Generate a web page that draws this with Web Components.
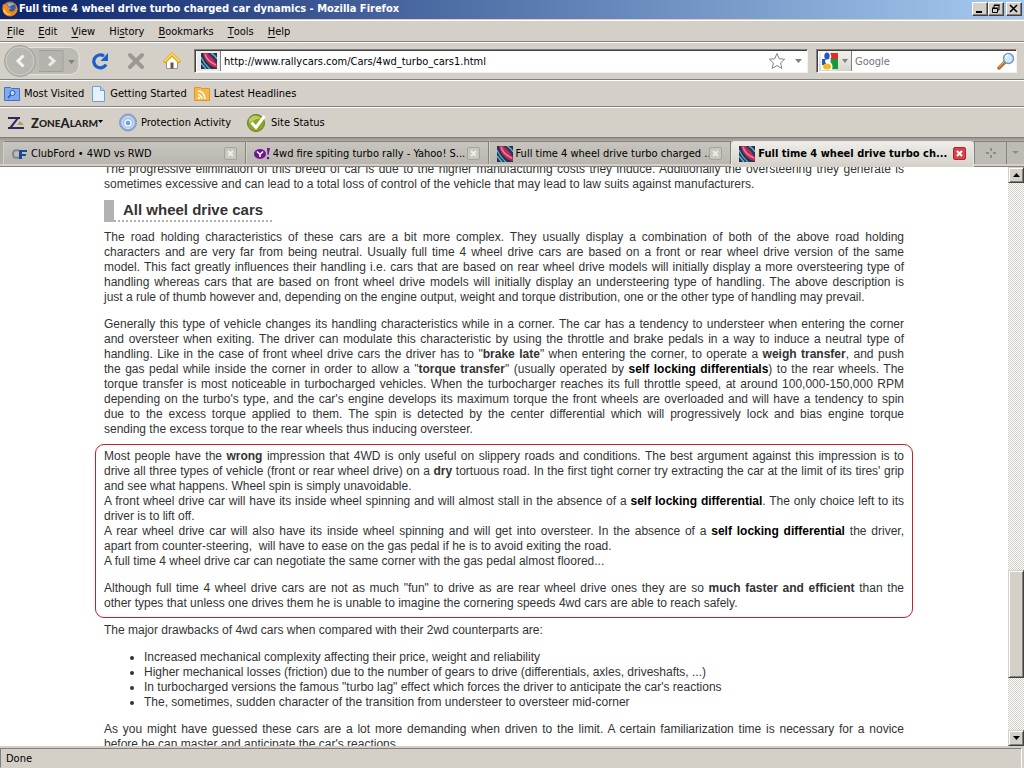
<!DOCTYPE html>
<html lang="en">
<head>
<meta charset="utf-8">
<title>Full time 4 wheel drive turbo charged car dynamics - Mozilla Firefox</title>
<style>
html, body { margin: 0; height: 100%; }
body { font: 11px/14px "DejaVu Sans Condensed", "Liberation Sans", sans-serif; color: #000; background: #d4d0c8; overflow: hidden; }
</style>
</head>
<body>
<browser-window></browser-window>
<script>
const define = (name, css, html) => {
  const template = document.createElement('template');
  template.innerHTML = `<style>
    *, *::before, *::after { box-sizing: border-box; }
    :host { display: flex; box-sizing: border-box; }
    button { font: inherit; color: inherit; background: none; border: 0; padding: 0; margin: 0; display: flex; align-items: center; white-space: nowrap; }
    svg { display: block; flex: none; }
    ${css}</style>${html}`;
  customElements.define(name, class extends HTMLElement {
    constructor() {
      super();
      this.attachShadow({ mode: 'open' }).append(template.content.cloneNode(true));
    }
  });
};

define('rally-icon', ':host { display: block; flex: none; width: 16px; height: 16px; }', `
  <svg width="16" height="16" viewBox="0 0 16 16"><rect width="16" height="16" fill="#26304c"/>
  <path d="M2 0h5q7 5 9 12v3q-4 0-7-3Q3 7 2 0z" fill="#b92f5c"/><path d="M4 1q2 7 11 11" fill="none" stroke="#ec7f9c" stroke-width="1.500"/><path d="M7 1q6 3 8 9" fill="none" stroke="#5a2450"/>
  <path d="M0 4q3 7 9 12" fill="none" stroke="#4fa9c4" stroke-width="1.500"/><path d="M0 10l5 6M10 0q4 2 6 6" fill="none" stroke="#58b6cd" stroke-width="1.500"/></svg>`);

define('title-bar', `
  :host { height: 20px; align-items: center; padding: 0 2px 2px 2px; border-bottom: 1px solid #d4d0c8; background: linear-gradient(90deg, #0a246a, #a6caf0); color: #fff; font-weight: bold; }
  .title { flex: 1; margin-left: 1px; padding-top: 1px; white-space: nowrap; overflow: hidden; }
  button { width: 16px; height: 14px; justify-content: center; background: #d4d0c8; border: 1px solid; border-color: #fff #404040 #404040 #fff; box-shadow: inset -1px -1px #808080; }
  .close { margin-left: 2px; }`, `
  <svg width="16" height="16" viewBox="0 0 16 16"><circle cx="8" cy="8" r="7.5" fill="#e66a12"/><circle cx="8.5" cy="6.5" r="5" fill="#2862a8"/><path d="M5 3q4-3 8 1-3-1-4 1l-2 1z" fill="#7fb8e4"/><path d="M1 3l2 1 2-1 1 3 3 1-2 2q1 3 5 1 3-2 2-6 3 4 0 8-4 4-9 2Q-1 10 1 3z" fill="#f18a1c"/><path d="M2 7q2 6 8 7-7 1-9-4z" fill="#fbc54a"/></svg>
  <div class="title">Full time 4 wheel drive turbo charged car dynamics - Mozilla Firefox</div>
  <button aria-label="Minimize"><svg width="12" height="10"><path d="M2 8h6" stroke="#000" stroke-width="2"/></svg></button>
  <button aria-label="Restore"><svg width="12" height="10"><path d="M4 4V1.5h5V6H8M4 1h6" stroke="#000" fill="none"/><path d="M2.500 4.500h5v4h-5zM2 4h6" stroke="#000" fill="none"/></svg></button>
  <button class="close" aria-label="Close"><svg width="12" height="10"><path d="M2 1l7 7M9 1L2 8" stroke="#000" stroke-width="1.6"/></svg></button>`);

define('menu-bar', `
  :host { height: 22px; align-items: center; padding: 1px 7px 0; gap: 14px; border-top: 1px solid #fff; border-bottom: 1px solid #808080; }
  u { text-underline-offset: 2px; }`, `
  <button><u>F</u>ile</button><button><u>E</u>dit</button><button><u>V</u>iew</button><button>Hi<u>s</u>tory</button><button><u>B</u>ookmarks</button><button><u>T</u>ools</button><button><u>H</u>elp</button>`);

define('nav-bar', `
  :host { height: 38px; align-items: center; padding: 0 7px 0 3px; border-top: 1px solid #fff; border-bottom: 1px solid #808080; }
  .icon { width: 36px; justify-content: center; }
  .travel { margin-right: 2px; }
  .field { display: flex; align-items: center; height: 24px; background: #fff; border: 1px solid; border-color: #808080 #f4f2ee #f4f2ee #808080; box-shadow: inset 1px 1px #404040; padding: 1px 1px 1px 2px; }
  .url { flex: 1; margin: 0 8px 0 4px; }
  .search { width: 201px; }
  .id { height: 100%; width: 24px; justify-content: center; background: #eceae6; border-right: 1px solid #808080; }
  .engine { height: 100%; width: 33px; gap: 3px; padding-left: 2px; background: linear-gradient(#f2f0ec, #d8d4cc); border-right: 1px solid #808080; }
  input { flex: 1; min-width: 0; font: inherit; border: 0; outline: 0; padding: 2px 3px 0; background: none; color: #000; }
  input::placeholder { color: #757575; opacity: 1; }
  .drop { margin: 0 4px 0 9px; }`, `
  <button class="travel" aria-label="Back and forward"><svg width="77" height="32" viewBox="0 0 77 32">
    <rect x="4" y="2.500" width="72" height="27" rx="9" fill="#bdbab4" stroke="#e6e3de"/><path d="M36 5.500h24v21H36" fill="#b5b3ae" stroke="#a3a09a"/>
    <circle cx="17" cy="16" r="15.500" fill="#b9b7b2" stroke="#a3a19b"/><circle cx="17" cy="16" r="14" fill="none" stroke="#d0cec9"/>
    <path d="M20.500 10.500L15 16l5.500 5.500" fill="none" stroke="#f5f4f2" stroke-width="3"/><path d="M46 11.500l5 4.500-5 4.500" fill="none" stroke="#ecebe8" stroke-width="3"/><path d="M65 15h7l-3.500 4z" fill="#85827c"/></svg></button>
  <button class="icon" aria-label="Reload"><svg width="18" height="18" viewBox="0 0 18 18"><path d="M15 12.500A6.500 6.500 0 1 1 13 4" fill="none" stroke="#1b5fce" stroke-width="3.200"/><path d="M17 1v8H9.500z" fill="#1b5fce"/></svg></button>
  <button class="icon" aria-label="Stop"><svg width="18" height="18" viewBox="0 0 18 18"><path d="M3 3l12 12M15 3L3 15" stroke="#9c9993" stroke-width="4" stroke-linecap="round"/></svg></button>
  <button class="icon" aria-label="Home"><svg width="18" height="18" viewBox="0 0 18 18"><path d="M3.500 9v7.500h11V9L9 4z" fill="#fff" stroke="#8d96a8"/><path d="M7.500 10.500h3v6h-3z" fill="#765134"/><path d="M1 10.500L9 2.500l8 8" fill="none" stroke="#e4a416" stroke-width="3.500"/><path d="M1.500 9.500L9 2l7.500 7.500" fill="none" stroke="#fbdc5c" stroke-width="1.500"/></svg></button>
  <div class="field url"><button class="id" aria-label="Site identity"><rally-icon></rally-icon></button>
    <input type="text" aria-label="Address" value="http://www.rallycars.com/Cars/4wd_turbo_cars1.html">
    <button aria-label="Bookmark this page"><svg width="18" height="18" viewBox="0 0 18 18"><path d="M9 1.500l2.200 5.200 5.500.5-4.100 3.700 1.200 5.500L9 13.500l-4.800 2.900 1.200-5.500L1.300 7.200l5.500-.5z" fill="#fff" stroke="#858585" stroke-linejoin="round"/></svg></button>
    <button class="drop" aria-label="Show history"><svg width="7" height="4"><path d="M0 0h7L3.500 4z" fill="#808080"/></svg></button></div>
  <div class="field search"><button class="engine" aria-label="Search engine"><svg width="18" height="18" viewBox="0 0 18 18"><path d="M0 0h9v18H0z" fill="#fff"/><path d="M8 1h9v6H8z" fill="#e42a25"/><path d="M10 7h7v10h-8z" fill="#139a3e"/><path d="M1 7h6v6H1z" fill="#2456bd"/><path d="M8 0q3 2 2 6l-3 3q6 2 4 9H7L4 9z" fill="#fff"/><ellipse cx="6" cy="4" rx="2.700" ry="3.500" fill="#2456bd"/><ellipse cx="6" cy="14.500" rx="4" ry="3" fill="#f7b91b"/></svg><svg width="6" height="4"><path d="M0 0h6L3 4z" fill="#808080"/></svg></button>
    <input type="text" aria-label="Search" placeholder="Google"><button aria-label="Go"><svg width="18" height="18" viewBox="0 0 18 18"><path d="M2 16l6-6" stroke="#b27537" stroke-width="3.500" stroke-linecap="round"/><path d="M2 15l5-5" stroke="#e3b473"/><circle cx="11.500" cy="6.500" r="5" fill="#cde9fb" stroke="#7998b5" stroke-width="1.500"/><path d="M8.500 6q.5-3 3-3" fill="none" stroke="#fff" stroke-width="1.500"/></svg></button></div>`);

define('bookmark-bar', `
  :host { height: 27px; align-items: center; padding: 1px 4px 0; gap: 7px; border-top: 1px solid #fff; border-bottom: 1px solid #808080; }
  a { display: flex; align-items: center; gap: 4px; color: inherit; text-decoration: none; white-space: nowrap; }`, `
  <a href="#visited"><svg width="16" height="16" viewBox="0 0 16 16"><path d="M.5 1.500h6l1 1h8v12H.5z" fill="#80aaf0" stroke="#4470cd"/><circle cx="8.500" cy="7" r="2.500" fill="#c5daff" stroke="#2b55b5"/><path d="M6.500 9L4 12" stroke="#2b55b5" stroke-width="1.500"/></svg>Most Visited</a>
  <a href="#started"><svg width="15" height="16" viewBox="0 0 15 16"><path d="M1.500.5h8l4 4v11h-12z" fill="#e5f1ff" stroke="#6f9fd5"/><path d="M9.500.5v4h4" fill="#a9cbf2" stroke="#6f9fd5"/></svg>Getting Started</a>
  <a href="#headlines"><svg width="16" height="16" viewBox="0 0 16 16"><path d="M.5 1.500h6l1 1h8v12H.5z" fill="#f7b746" stroke="#e3951e"/><path d="M4 5q6 0 7 8M4 8.500q3 0 4 4.500" fill="none" stroke="#fff" stroke-width="1.500"/><circle cx="5" cy="12" r="1.200" fill="#fff"/></svg>Latest Headlines</a>`);

define('zone-bar', `
  :host { height: 31px; align-items: center; padding: 0 8px; gap: 16px; border-top: 1px solid #fff; border-bottom: 1px solid #808080; }
  button { gap: 4px; }
  .brand { font: bold 10px/14px Lato, sans-serif; color: #222; gap: 0; }
  .brand b { font-size: 13px; font-weight: 900; } .brand span { font-weight: 900; }
  .brand svg { margin-right: 6px; } .brand svg:last-child { margin: 0 0 3px 0; }`, `
  <button class="brand"><svg width="17" height="14" viewBox="0 0 17 14"><path d="M0 1h12L4 11.500h11V13H0l8-10H0z" fill="#30275e"/><path d="M0 1h12v2H0zM0 11h16v2H0z" fill="#30275e"/><path d="M9 9l3-4 4 4z" fill="#a4a657"/></svg><b>Z</b><span>ONE</span><b>A</b><span>LARM</span><svg width="5" height="3"><path d="M0 0h5L2.500 3z"/></svg></button>
  <button><svg width="18" height="19" viewBox="0 0 18 19"><circle cx="9" cy="9.500" r="8.500" fill="#8fabd8" stroke="#8a9cb9"/><circle cx="9" cy="9.500" r="6" fill="#a9c4ec" stroke="#dce9fb"/><circle cx="9" cy="10" r="3" fill="#6f9be0" stroke="#eff6ff" stroke-width="1.500"/></svg>Protection Activity</button>
  <button><svg width="20" height="20" viewBox="0 0 20 20"><circle cx="9" cy="10" r="8.500" fill="#8aa728" stroke="#6b7d26"/><path d="M2 6q6-7 13 0-6-1-13 4z" fill="#bccb62"/><path d="M4.500 9.500l4.500 5L17.500 3" fill="none" stroke="#fff" stroke-width="3"/></svg>Site Status</button>`);

define('browser-tab', `
  :host { flex: 1 1 25%; min-width: 0; height: 23px; align-items: center; padding: 0 8px 0 7px; border: 1px solid #858279; border-bottom: 0; border-left-color: #d3d0ca; background: linear-gradient(#c8c5be, #b9b6af); }
  :host([selected]) { height: 26px; padding-bottom: 3px; padding-right: 7px; font-weight: bold; border-radius: 4px 4px 0 0; border-color: #e9e7e4; background: linear-gradient(#efedea, #d4d0c8); }
  .pick { flex: 1; min-width: 0; gap: 3px; padding-top: 1px; }
  .close { flex: none; width: 13px; height: 13px; justify-content: center; border: 1px solid #a5a29c; border-radius: 2px; background: #c9c6c0; color: #eeece8; }
  :host([selected]) .close { background: #d8434b; border-color: #b3232c; color: #fff; }`, `
  <button class="pick"><slot name="icon"></slot><slot></slot></button>
  <button class="close" aria-label="Close tab"><svg width="9" height="9"><path d="M2 2l5 5M7 2L2 7" stroke="currentColor" stroke-width="2"/></svg></button>`);

define('tab-strip', `
  :host { height: 29px; align-items: flex-start; padding: 3px 0 0 3px; background: linear-gradient(#99968f, #b1aea7 3px, #b1aea7 26px, #d4d0c8 26px, #d4d0c8 28px, #858279 28px); }
  .side { flex: none; height: 23px; width: 32px; justify-content: center; border: 1px solid #858279; border-width: 1px 0 0 1px; background: #bebbb4; }
  .list { width: 18px; }`, `
  <browser-tab><svg slot="icon" width="17" height="14" viewBox="0 0 17 14"><path d="M8 3.500Q2 2 2 7t6 3.500" fill="none" stroke="#7d8694" stroke-width="2"/><path d="M8 12V3h8v2h-5v2h4v2h-4v3z" fill="#164d94"/></svg>ClubFord • 4WD vs RWD</browser-tab>
  <browser-tab><svg slot="icon" width="16" height="16" viewBox="0 0 16 16"><ellipse cx="6" cy="8" rx="6" ry="5" fill="#6d1591"/><path d="M3 5.500l3 3 3-3M6 8v3" stroke="#fff" stroke-width="1.500" fill="none"/><path d="M13 2h3l-1.500 7h-1z" fill="#6d1591"/><circle cx="14" cy="12" r="1.300" fill="#6d1591"/></svg>4wd fire spiting turbo rally - Yahoo! S...</browser-tab>
  <browser-tab><rally-icon slot="icon"></rally-icon>Full time 4 wheel drive turbo charged ...</browser-tab>
  <browser-tab selected><rally-icon slot="icon"></rally-icon>Full time 4 wheel drive turbo ch...</browser-tab>
  <button class="side" aria-label="New tab"><svg width="10" height="10"><path d="M5 0v3M5 7v3M0 5h3M7 5h3" stroke="#8f8c86" stroke-width="2"/></svg></button>
  <button class="side list" aria-label="List all tabs"><svg width="7" height="4"><path d="M0 0h7L3.500 3z" fill="#908d87"/></svg></button>`);

define('car-article', `
  :host { display: block; flex: 1; min-width: 0; overflow: hidden; background: #fff; color: #333; font: 12px/15px "Liberation Sans", sans-serif; }
  article { max-width: 800px; margin: -5px auto 0; text-align: justify; }
  p { margin: 0 0 12px; }
  p span { display: block; text-align-last: justify; }
  .callout p:last-child, p.before { margin-bottom: 0; }
  p.lead { margin-bottom: 8px; }
  .callout { margin: 7px -9px 5px; padding: 4px 8px 6px; border: 1px solid #c4202e; border-radius: 9px; }
  h2 { display: table; margin: 0 0 8px; height: 22px; padding: 0 10px 0 9px; border-left: 10px solid #b2b2b2; font: bold 15px/20px "Liberation Sans", sans-serif; background: repeating-linear-gradient(90deg, #b2b2b2 0 2px, #fff 2px 4px) bottom / 100% 2px no-repeat; }
  a { color: #000; font-weight: bold; text-decoration: none; }
  ul { margin: 0 0 12px; padding-left: 40px; text-align: left; }`, `
  <article>
  <p class="lead"><span>The progressive elimination of this breed of car is due to the higher manufacturing costs they induce. Additionally the oversteering they generate is</span>
  sometimes excessive and can lead to a total loss of control of the vehicle that may lead to law suits against manufacturers.</p>
  <h2>All wheel drive cars</h2>
  <p><span>The road holding characteristics of these cars are a bit more complex. They usually display a combination of both of the above road holding</span>
  <span>characters and are very far from being neutral. Usually full time 4 wheel drive cars are based on a front or rear wheel drive version of the same</span>
  <span>model. This fact greatly influences their handling i.e. cars that are based on rear wheel drive models will initially display a more oversteering type of</span>
  <span>handling whereas cars that are based on front wheel drive models will initially display an understeering type of handling. The above description is</span>
  just a rule of thumb however and, depending on the engine output, weight and torque distribution, one or the other type of handling may prevail.</p>
  <p class="before"><span>Generally this type of vehicle changes its handling characteristics while in a corner. The car has a tendency to understeer when entering the corner</span>
  <span>and oversteer when exiting. The driver can modulate this characteristic by using the throttle and brake pedals in a way to induce a neutral type of</span>
  <span>handling. Like in the case of front wheel drive cars the driver has to "<b>brake late</b>" when entering the corner, to operate a <b>weigh transfer</b>, and push</span>
  <span>the gas pedal while inside the corner in order to allow a "<b>torque transfer</b>" (usually operated by <a href="#differentials">self locking differentials</a>) to the rear wheels. The</span>
  <span>torque transfer is most noticeable in turbocharged vehicles. When the turbocharger reaches its full throttle speed, at around 100,000-150,000 RPM</span>
  <span>depending on the turbo's type, and the car's engine develops its maximum torque the front wheels are overloaded and will have a tendency to spin</span>
  <span>due to the excess torque applied to them. The spin is detected by the center differential which will progressively lock and bias engine torque</span>
  sending the excess torque to the rear wheels thus inducing oversteer.</p>
  <div class="callout">
  <p><span>Most people have the <b>wrong</b> impression that 4WD is only useful on slippery roads and conditions. The best argument against this impression is to</span>
  <span>drive all three types of vehicle (front or rear wheel drive) on a <b>dry</b> tortuous road. In the first tight corner try extracting the car at the limit of its tires' grip</span>
  and see what happens. Wheel spin is simply unavoidable.
  <span>A front wheel drive car will have its inside wheel spinning and will almost stall in the absence of a <a href="#differentials">self locking differential</a>. The only choice left to its</span>
  driver is to lift off.
  <span>A rear wheel drive car will also have its inside wheel spinning and will get into oversteer. In the absence of a <a href="#differentials">self locking differential</a> the driver,</span>
  apart from counter-steering,&nbsp; will have to ease on the gas pedal if he is to avoid exiting the road.<br>
  A full time 4 wheel drive car can negotiate the same corner with the gas pedal almost floored...</p>
  <p><span>Although full time 4 wheel drive cars are not as much "fun" to drive as are rear wheel drive ones they are so <b>much faster and efficient</b> than the</span>
  other types that unless one drives them he is unable to imagine the cornering speeds 4wd cars are able to reach safely.</p>
  </div>
  <p>The major drawbacks of 4wd cars when compared with their 2wd counterparts are:</p>
  <ul><li>Increased mechanical complexity affecting their price, weight and reliability</li>
  <li>Higher mechanical losses (friction) due to the number of gears to drive (differentials, axles, driveshafts, ...)</li>
  <li>In turbocharged versions the famous "turbo lag" effect which forces the driver to anticipate the car's reactions</li>
  <li>The, sometimes, sudden character of the transition from understeer to oversteer mid-corner</li></ul>
  <p><span>As you might have guessed these cars are a lot more demanding when driven to the limit. A certain familiarization time is necessary for a novice</span>
  before he can master and anticipate the car's reactions.</p>
  </article>`);

define('scroll-bar', `
  :host { flex: none; width: 16px; flex-direction: column; background: repeating-conic-gradient(#d4d0c8 0 25%, #fff 0 50%) 0 0 / 2px 2px; }
  button, .thumb { flex: none; height: 16px; justify-content: center; background: #d4d0c8; border: 1px solid; border-color: #d4d0c8 #404040 #404040 #d4d0c8; box-shadow: inset 1px 1px #fff, inset -1px -1px #808080; }
  .thumb { height: 108px; } .above { flex: 388; } .below { flex: 52; }`, `
  <button aria-label="Scroll up"><svg width="7" height="4"><path d="M0 4h7L3.500 0z"/></svg></button>
  <div class="above"></div><div class="thumb"></div><div class="below"></div>
  <button aria-label="Scroll down"><svg width="7" height="4"><path d="M0 0h7L3.500 4z"/></svg></button>`);

define('status-bar', `
  :host { height: 22px; padding: 2px 2px 0 0; }
  div { flex: 1; padding: 3px 5px; border: 1px solid; border-color: #808080 #fff #d4d0c8 #808080; }`, `<div role="status">Done</div>`);

define('browser-window', `
  :host { flex-direction: column; height: 100vh; }
  title-bar, menu-bar, nav-bar, bookmark-bar, zone-bar, tab-strip, status-bar { flex: none; }
  main { display: flex; flex: 1; min-height: 0; }`, `
  <title-bar></title-bar><menu-bar></menu-bar><nav-bar></nav-bar><bookmark-bar></bookmark-bar><zone-bar></zone-bar><tab-strip></tab-strip>
  <main><car-article></car-article><scroll-bar></scroll-bar></main>
  <status-bar></status-bar>`);
</script>
</body>
</html>
